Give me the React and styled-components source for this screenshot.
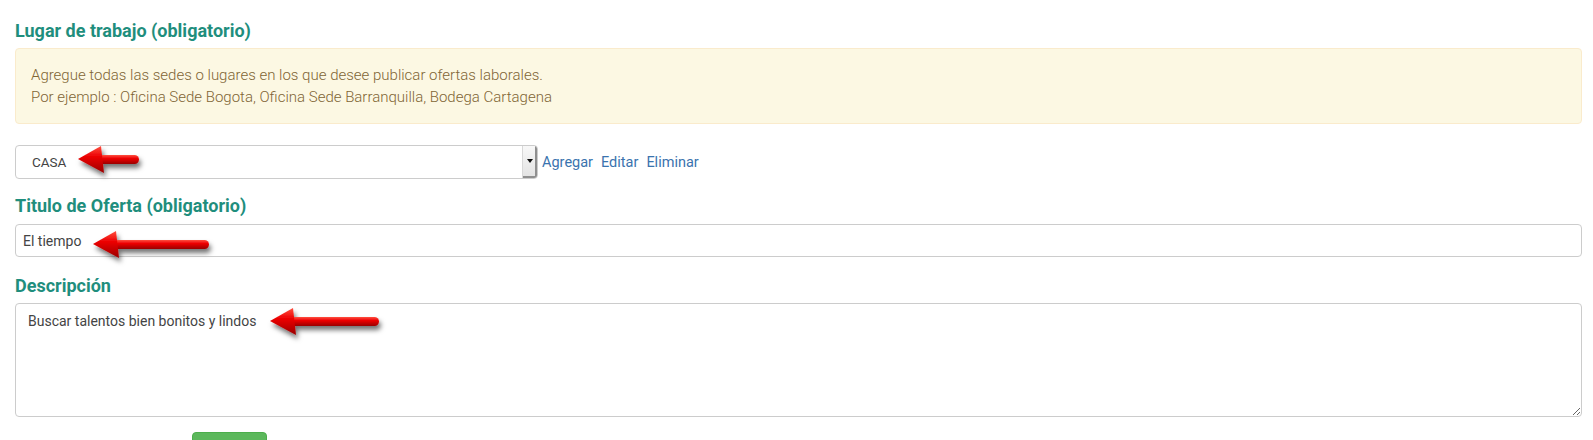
import React, { useId } from "react";
import styled, { createGlobalStyle } from "styled-components";

const Global = createGlobalStyle`
  html, body { margin: 0; padding: 0; background: #fff; }
  body { font-family: Roboto, "Liberation Sans", sans-serif; }
  * { box-sizing: border-box; }
`;

const Page = styled.div`
  padding: 21px 11px 0 15px;
  height: 440px;
  overflow: hidden;
  display: flex;
  flex-direction: column;
`;

const Label = styled.h3`
  margin: 0 0 ${(p) => p.$gap}px;
  font-family: Roboto, sans-serif;
  font-weight: 700;
  font-size: 18px;
  line-height: 20px;
  color: #1f8e7d;
`;

const Alert = styled.div`
  margin-bottom: 21px;
  padding: 15px;
  background: #fcf8e3;
  border: 1px solid #faebcc;
  border-radius: 4px;
  color: #7f6535;
  font-size: 15px;
  font-weight: 300;
  line-height: 22px;
`;

const Field = styled.div`
  position: relative;
  margin-bottom: ${(p) => p.$gap}px;
`;

const SelectRow = styled.div`
  display: flex;
  align-items: center;
`;

const SelectBox = styled.div`
  display: flex;
  width: 523px;
  height: 34px;
  border: 1px solid #ccc;
  border-radius: 4px;
  background: #fff;
  overflow: hidden;
`;

const SelectText = styled.span`
  flex: 1;
  padding-left: 16px;
  display: flex;
  align-items: center;
  font-size: 13.5px;
  color: #444;
`;

const DropButton = styled.span`
  width: 15px;
  display: flex;
  align-items: center;
  justify-content: center;
  background: linear-gradient(#f8f8f8, #e2e2e2);
  border-left: 1px solid #d8d8d8;
  box-shadow: inset -2px -2px 0 #8f8f8f;
  &::after {
    content: "";
    border-left: 3px solid transparent;
    border-right: 3px solid transparent;
    border-top: 4px solid #111;
    margin: -2px 1px 0 0;
  }
`;

const Links = styled.div`
  display: flex;
  gap: 8px;
  margin-left: 4px;
`;

const Link = styled.a`
  color: #3a73ae;
  font-size: 14.5px;
  text-decoration: none;
  cursor: pointer;
`;

const TextInput = styled.input`
  display: block;
  width: 100%;
  height: 33px;
  padding: 0 7px;
  border: 1px solid #ccc;
  border-radius: 4px;
  font-family: Roboto, sans-serif;
  font-size: 14px;
  color: #444;
  outline: none;
`;

const TextArea = styled.textarea`
  display: block;
  width: 100%;
  height: 114px;
  padding: 7px 12px;
  border: 1px solid #ccc;
  border-radius: 4px;
  font-family: Roboto, sans-serif;
  font-size: 14px;
  line-height: 20px;
  color: #444;
  outline: none;
`;

const ButtonRow = styled.div`
  display: flex;
  padding-left: 177px;
`;

const SaveButton = styled.button`
  width: 75px;
  height: 34px;
  padding: 0;
  border: 1px solid #4cae4c;
  border-radius: 4px;
  background: #5cb85c;
`;

const ArrowWrap = styled.svg`
  position: absolute;
  left: ${(p) => p.$left}px;
  top: ${(p) => p.$top}px;
  overflow: visible;
  pointer-events: none;
`;

function Arrow({ left, top, len }) {
  const id = useId().replace(/:/g, "");
  return (
    <ArrowWrap $left={left - 3} $top={top - 18} width={len + 12} height={40}>
      <defs>
        <linearGradient id={`g${id}`} x1="0" y1="0" x2="0" y2="1">
          <stop offset="0" stopColor="#ff5040" />
          <stop offset="0.4" stopColor="#ec0000" />
          <stop offset="1" stopColor="#9a0000" />
        </linearGradient>
        <filter id={`f${id}`} x="-20%" y="-60%" width="150%" height="240%">
          <feDropShadow dx="2" dy="4" stdDeviation="2.5" floodColor="#000" floodOpacity="0.55" />
        </filter>
      </defs>
      <g filter={`url(#f${id})`}>
        <rect x="20" y="14" width={len - 20} height="9" rx="4.5" fill={`url(#g${id})`} />
        <polygon points="3,18 26,5 29,32" fill={`url(#g${id})`} />
      </g>
    </ArrowWrap>
  );
}

export default function App() {
  return (
    <>
      <Global />
      <Page>
        <Label $gap={7}>Lugar de trabajo (obligatorio)</Label>
        <Alert>
          Agregue todas las sedes o lugares en los que desee publicar ofertas laborales.
          <br />
          Por ejemplo : Oficina Sede Bogota, Oficina Sede Barranquilla, Bodega Cartagena
        </Alert>
        <Field $gap={17}>
          <SelectRow>
            <SelectBox>
              <SelectText>CASA</SelectText>
              <DropButton />
            </SelectBox>
            <Links>
              <Link>Agregar</Link>
              <Link>Editar</Link>
              <Link>Eliminar</Link>
            </Links>
          </SelectRow>
          <Arrow left={63} top={14} len={64} />
        </Field>
        <Label $gap={8}>Titulo de Oferta (obligatorio)</Label>
        <Field $gap={19}>
          <TextInput defaultValue="El tiempo" readOnly />
          <Arrow left={78} top={20} len={119} />
        </Field>
        <Label $gap={7}>Descripción</Label>
        <Field $gap={15}>
          <TextArea defaultValue="Buscar talentos bien bonitos y lindos" readOnly />
          <Arrow left={255} top={18} len={112} />
        </Field>
        <ButtonRow>
          <SaveButton aria-label="Guardar" />
        </ButtonRow>
      </Page>
    </>
  );
}
